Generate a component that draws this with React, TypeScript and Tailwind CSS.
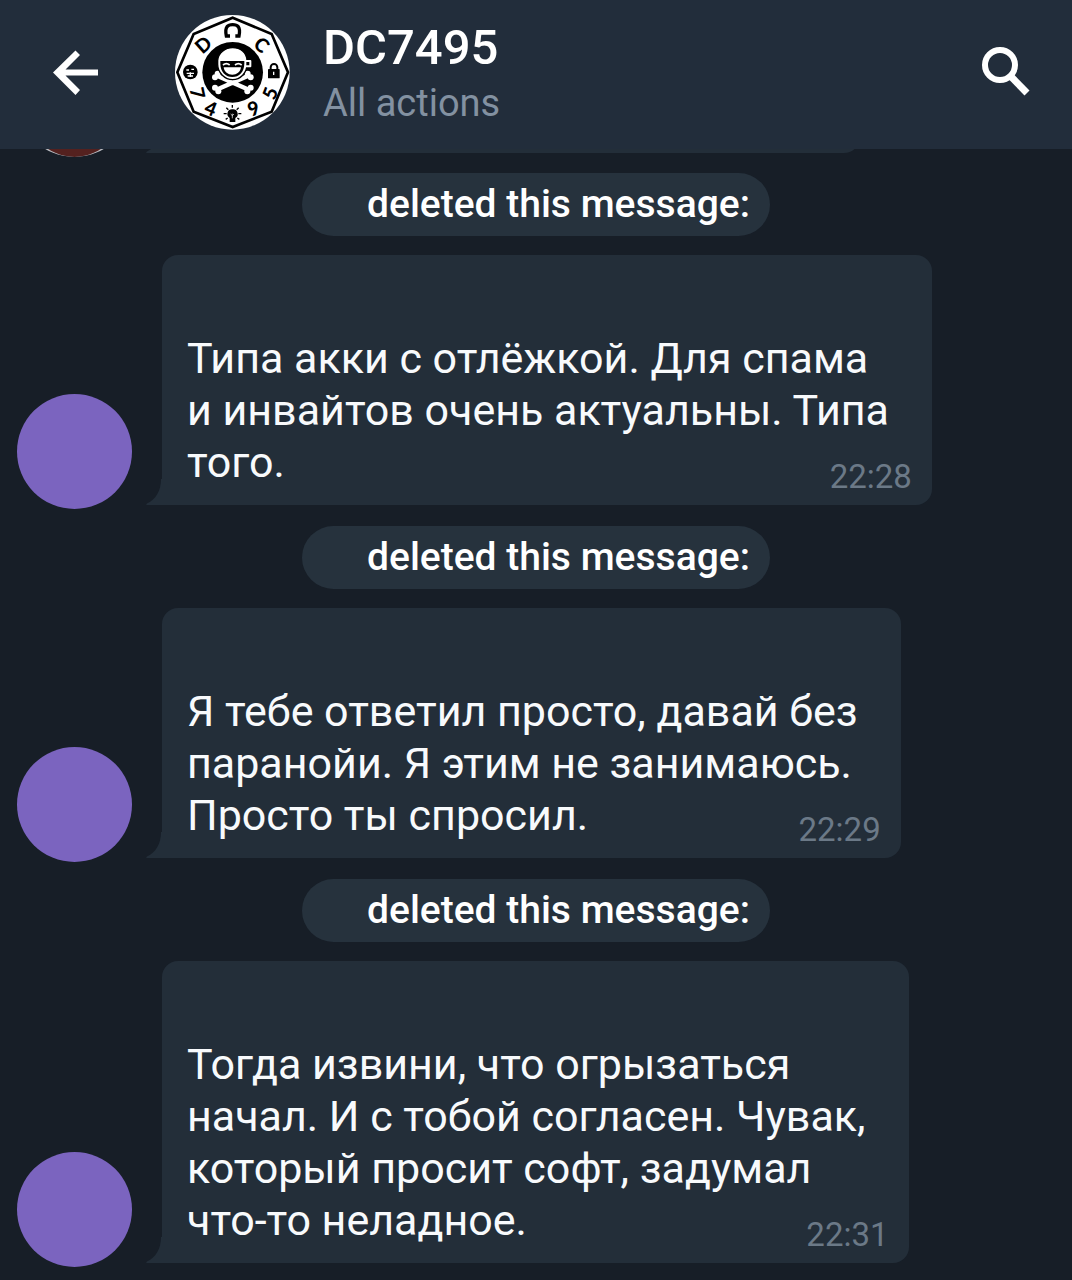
interface Message {
  id: number
  lines: string[]
  time: string
}

const messages: Message[] = [
  {
    id: 1,
    lines: [
      'Типа акки с отлёжкой. Для спама',
      'и инвайтов очень актуальны. Типа',
      'того.',
    ],
    time: '22:28',
  },
  {
    id: 2,
    lines: [
      'Я тебе ответил просто, давай без',
      'паранойи. Я этим не занимаюсь.',
      'Просто ты спросил.',
    ],
    time: '22:29',
  },
  {
    id: 3,
    lines: [
      'Тогда извини, что огрызаться',
      'начал. И с тобой согласен. Чувак,',
      'который просит софт, задумал',
      'что-то неладное.',
    ],
    time: '22:31',
  },
]

const badgeLetters = [
  { char: 'D', x: 114, y: 118, rotate: -42 },
  { char: 'C', x: 291, y: 118, rotate: 42 },
  { char: '7', x: 99, y: 264, rotate: 78 },
  { char: '4', x: 138, y: 309, rotate: 22 },
  { char: '9', x: 265, y: 309, rotate: -22 },
  { char: '5', x: 314, y: 264, rotate: -68 },
]

function GroupLogo() {
  return (
    <svg
      viewBox="30 30 345 345"
      className="size-[115px] shrink-0"
      role="img"
      aria-label="DC7495"
    >
      <circle cx="202" cy="202" r="172" fill="#fff" />
      <path
        d="M203 38 320 87 369 202 320 320 203 366 86 320 37 202 86 87Z"
        fill="none"
        stroke="#000"
        strokeWidth="8"
      />
      <circle cx="203" cy="202" r="91" fill="#000" />

      {/* Ring */}
      {badgeLetters.map(({ char, x, y, rotate }) => (
        <text
          key={char}
          x={x}
          y={y}
          transform={`rotate(${rotate} ${x} ${y})`}
          textAnchor="middle"
          dominantBaseline="central"
          fontFamily="Lato, sans-serif"
          fontSize="58"
          fontWeight="900"
        >
          {char}
        </text>
      ))}
      <path
        d="M195 93h-11c-6-30 6-34 19-34s25 4 19 34h-11"
        fill="none"
        stroke="#000"
        strokeWidth="10"
      />
      <circle cx="76" cy="201" r="22" />
      <path
        d="M64 195h8M79 193h8M65 205h22M68 213h16M76 202v14"
        stroke="#fff"
        strokeWidth="4"
      />
      <rect x="309" y="192" width="35" height="28" rx="2" />
      <path
        d="M317 196v-9a10 10 0 0 1 20 0v9"
        fill="none"
        stroke="#000"
        strokeWidth="6"
      />
      <path d="M326 200v10" stroke="#fff" strokeWidth="4" />
      <path d="M202 313a14 14 0 0 0-8 26v12h17v-12a14 14 0 0 0-9-26Z" />
      <path
        d="M202 300v8M184 308l6 6M221 308l-6 6M176 326h9M220 326h9M182 343l6-4M223 343l-6-4"
        stroke="#000"
        strokeWidth="4"
      />
      <path d="M202 326v14M197 327l5 5 5-5" fill="none" stroke="#fff" strokeWidth="2" />

      {/* Bones */}
      <g stroke="#fff" strokeWidth="13" strokeLinecap="round">
        <path d="M158 213 248 253M248 213 158 253" />
      </g>
      <g fill="#fff">
        <circle cx="158" cy="206" r="9" />
        <circle cx="150" cy="217" r="9" />
        <circle cx="248" cy="206" r="9" />
        <circle cx="257" cy="217" r="9" />
        <circle cx="150" cy="248" r="9" />
        <circle cx="160" cy="259" r="9" />
        <circle cx="257" cy="248" r="9" />
        <circle cx="247" cy="259" r="9" />
      </g>

      {/* Skull cup */}
      <path
        d="M158 166C160 144 180 128 203 128s42 14 43 38v12c0 26-20 46-43 46s-45-20-45-46Z"
        fill="#fff"
        stroke="#000"
        strokeWidth="4"
      />
      <path
        d="M242 168h14v16h-14"
        fill="none"
        stroke="#fff"
        strokeWidth="6"
        strokeLinejoin="round"
      />
      <path d="M166 168h72v8c0 24-16 40-36 40s-36-16-36-40Z" fill="#000" />
      <path d="M174 180q10-8 20 0M210 180q10-8 20 0" fill="none" stroke="#fff" strokeWidth="5" />
      <path d="M176 187h52c-2 15-13 22-26 22s-24-7-26-22Z" fill="#fff" />
    </svg>
  )
}

function BubbleTail() {
  return (
    <svg
      viewBox="0 0 16 26"
      className="h-[26px] w-4 shrink-0 fill-[#232e39]"
      aria-hidden="true"
    >
      <path d="M16 0v26H1c-1 0-1-1 0-1.500C10 20 15 12 15 0Z" />
    </svg>
  )
}

function MessageGroup({ message }: { message: Message }) {
  return (
    <li className="flex flex-col gap-[19px]">
      <div className="h-[63px] self-center rounded-full bg-[#26323d] pr-5 pl-[65px] text-[39px] leading-[63px] font-medium text-white">
        deleted this message:
      </div>

      <div className="flex items-end pl-[17px]">
        <div className="-mb-1 size-[115px] shrink-0 rounded-full bg-[#7b64bf]" />
        <div className="w-3.5 shrink-0" />
        <BubbleTail />
        <div className="relative rounded-2xl rounded-bl-none bg-[#232e39] pt-[77px] pr-[43px] pb-[17px] pl-[25px]">
          <p className="text-[43px] leading-[52px] text-[#f8fafc]">
            {message.lines.map((line) => (
              <span key={line} className="block">
                {line}
              </span>
            ))}
          </p>
          <time className="absolute right-5 bottom-2 text-[33px] leading-10 text-[#6b7987]">
            {message.time}
          </time>
        </div>
      </div>
    </li>
  )
}

export default function App() {
  return (
    <div className="min-h-screen bg-[#171e27] font-[Roboto,sans-serif]">
      {/* Header */}
      <header className="flex h-[149px] items-center bg-[#222d3b] pr-10 pb-1 pl-[50px] text-white">
        <button type="button" aria-label="Back" className="shrink-0">
          <svg viewBox="0 0 50 50" className="size-[50px]">
            <path
              d="M48 21.500H15.500L30 7 25.500 2.500 3 24.500 25.500 47 30 42 15.500 27.500H48Z"
              fill="currentColor"
            />
          </svg>
        </button>
        <div className="ml-[75px] flex flex-1 items-center gap-[33px]">
          <GroupLogo />
          <div className="pt-1">
            <h1 className="text-[49px] leading-[56px] font-medium">DC7495</h1>
            <p className="text-[38px] leading-[54px] text-[#8391a1]">
              All actions
            </p>
          </div>
        </div>
        <button type="button" aria-label="Search" className="shrink-0">
          <svg viewBox="0 0 52 52" className="size-[52px]" fill="none" stroke="currentColor">
            <circle cx="20" cy="18" r="15" strokeWidth="6" />
            <path d="M31 29.500 47 46" strokeWidth="7" />
          </svg>
        </button>
      </header>

      <main>
        {/* Bottom edge of the message scrolled under the header */}
        <div className="flex h-2 items-end overflow-hidden pl-[17px]">
          <div className="size-[115px] shrink-0 rounded-full border-x-[6px] border-[#b9bcc2] bg-[#54211f]" />
          <div className="mb-1 ml-3.5 flex flex-1 items-end pr-[212px]">
            <BubbleTail />
            <div className="h-16 flex-1 rounded-br-2xl bg-[#232e39]" />
          </div>
        </div>

        <ul className="flex flex-col gap-[21px] pt-4 pb-[18px]">
          {messages.map((message) => (
            <MessageGroup key={message.id} message={message} />
          ))}
        </ul>
      </main>
    </div>
  )
}
